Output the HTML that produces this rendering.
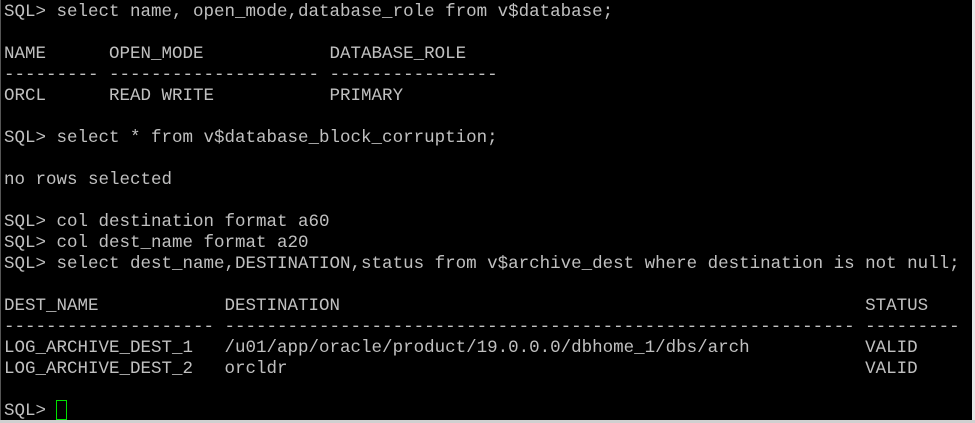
<!DOCTYPE html>
<html><head><style>
html,body{margin:0;padding:0;background:#000;width:975px;height:423px;overflow:hidden}
.t{position:absolute;left:0;top:0;width:972px;height:420px;background:#000;border-left:1px solid #555}
.r{position:absolute;left:972px;top:0;width:3px;height:423px;background:#e8e8e8}
.b{position:absolute;left:0;top:420px;width:975px;height:3px;background:#d0d0d0}
pre{position:absolute;left:4px;top:2px;margin:0;font-family:"Liberation Mono",monospace;font-size:17.5px;line-height:21px;color:#c0c0c0;white-space:pre}
.c{position:absolute;left:56px;top:400px;width:9px;height:18px;border:1px solid #00e000;box-sizing:content-box}
</style></head><body>
<div class="t"></div><div class="r"></div><div class="b"></div>
<pre>SQL> select name, open_mode,database_role from v$database;

NAME      OPEN_MODE            DATABASE_ROLE
--------- -------------------- ----------------
ORCL      READ WRITE           PRIMARY

SQL> select * from v$database_block_corruption;

no rows selected

SQL> col destination format a60
SQL> col dest_name format a20
SQL> select dest_name,DESTINATION,status from v$archive_dest where destination is not null;

DEST_NAME            DESTINATION                                                  STATUS
-------------------- ------------------------------------------------------------ ---------
LOG_ARCHIVE_DEST_1   /u01/app/oracle/product/19.0.0.0/dbhome_1/dbs/arch           VALID
LOG_ARCHIVE_DEST_2   orcldr                                                       VALID

SQL> </pre>
<div class="c"></div>
</body></html>
